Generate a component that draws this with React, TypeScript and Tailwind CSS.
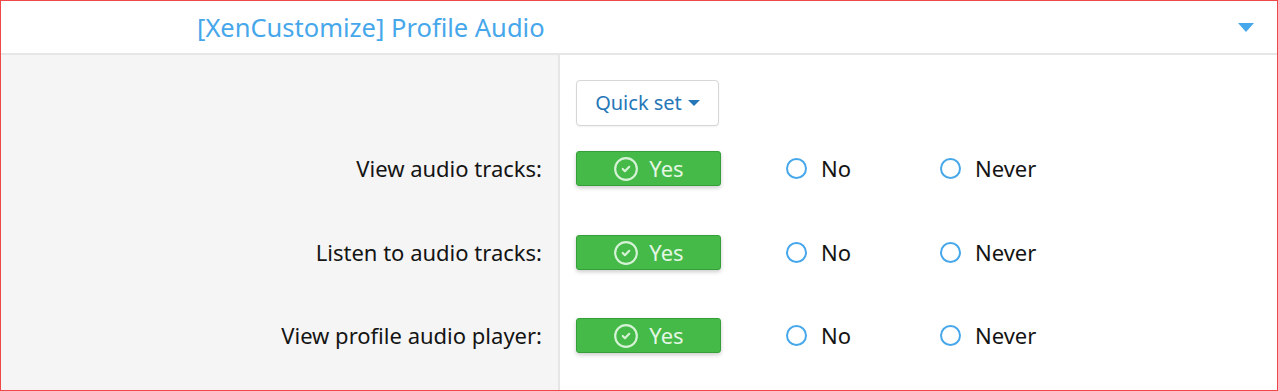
import { CircleCheck } from "lucide-react";

const rows = [
  { label: "View audio tracks:", pt: "pt-[25px]" },
  { label: "Listen to audio tracks:", pt: "pt-[25px]" },
  { label: "View profile audio player:", pt: "pt-[24px]" },
];

function Radio({ text, width }: { text: string; width: string }) {
  return (
    <label className={`flex items-center gap-[14px] ${width}`}>
      <span className="h-[21px] w-[21px] rounded-full border-2 border-[#47a7eb] bg-white" />
      <span className="text-[22px] text-[#141414]">{text}</span>
    </label>
  );
}

export default function App() {
  return (
    <div
      className="flex h-[391px] w-[1278px] flex-col overflow-hidden border border-[#f04848] bg-white"
      style={{ fontFamily: '"Noto Sans", "Open Sans", sans-serif' }}
    >
      <header className="flex h-[54px] shrink-0 items-center justify-between border-b-2 border-[#e6e6e6] pl-[196px] pr-[23px]">
        <h2 className="text-[25.5px] text-[#47a7eb]">[XenCustomize] Profile Audio</h2>
        <span className="h-0 w-0 border-x-[8px] border-t-[9px] border-x-transparent border-t-[#47a7eb]" />
      </header>

      <div className="flex">
        <div className="w-[559px] shrink-0 border-r-2 border-[#e6e6e6] bg-[#f5f5f5]" />
        <div className="pl-[16px] pt-[25px]">
          <button className="flex h-[46px] w-[143px] items-center justify-center gap-[6px] rounded-[4px] border border-[#d6d6d6] bg-white text-[20px] text-[#2577b8] shadow-[0_1px_2px_rgba(0,0,0,0.06)]">
            Quick set
            <span className="h-0 w-0 border-x-[6px] border-t-[6px] border-x-transparent border-t-[#2577b8]" />
          </button>
        </div>
      </div>

      {rows.map((r) => (
        <div key={r.label} className="flex">
          <div
            className={`flex w-[559px] shrink-0 items-start justify-end border-r-2 border-[#e6e6e6] bg-[#f5f5f5] pr-[16px] ${r.pt} pb-[24px]`}
          >
            <span className="flex h-[35px] items-center text-[22px] text-[#141414]">{r.label}</span>
          </div>
          <div className={`flex items-start pl-[16px] ${r.pt} pb-[24px]`}>
            <div className="w-[210px]">
              <button className="flex h-[35px] w-[145px] items-center justify-center gap-[10px] rounded-[3px] border border-[#35a03a] bg-[#45ba48] text-[22px] text-[#e4f6e4] shadow-[0_2px_4px_rgba(0,0,0,0.2)]">
                <CircleCheck className="h-[26px] w-[26px] text-[#d6f2d6]" strokeWidth={2} />
                Yes
              </button>
            </div>
            <div className="flex h-[35px] items-center">
              <Radio text="No" width="w-[154px]" />
              <Radio text="Never" width="w-[160px]" />
            </div>
          </div>
        </div>
      ))}

      <div className="flex flex-1">
        <div className="w-[559px] shrink-0 border-r-2 border-[#e6e6e6] bg-[#f5f5f5]" />
      </div>
    </div>
  );
}
